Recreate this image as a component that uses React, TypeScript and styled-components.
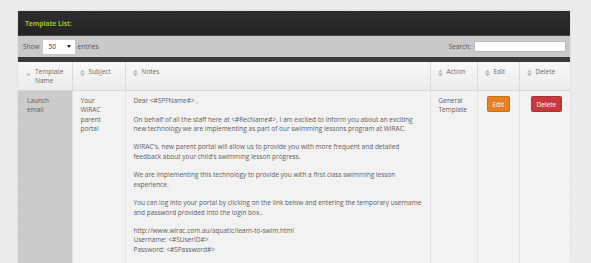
import React from 'react';
import styled, { createGlobalStyle } from 'styled-components';

const GlobalStyle = createGlobalStyle`
  html, body { margin: 0; padding: 0; }
  body {
    background-color: #ebebeb;
    background-image: repeating-linear-gradient(45deg, rgba(255,255,255,0.18) 0 1px, transparent 1px 3px);
    font-family: "Open Sans", "DejaVu Sans", sans-serif;
    color: #5c5c5c;
  }
`;

const Page = styled.div`
  padding: 11px 0 0 18px;
  height: 263px;
  box-sizing: border-box;
  overflow: hidden;
`;
const Panel = styled.div`
  width: 552px;
  box-shadow: 0 0 2px rgba(0, 0, 0, 0.12);
`;
const PanelHead = styled.div`
  height: 24px;
  background: linear-gradient(#2f2f31, #232325);
  border-bottom: 1px solid #444;
  display: flex; align-items: center;
  padding-left: 7px;
`;
const Title = styled.h2`
  margin: 0; font-size: 6.8px; font-weight: 700;
  color: #a6bd22; letter-spacing: -0.1px;
`;
const Toolbar = styled.div`
  height: 21px;
  background: #c9c9c9;
  display: flex; align-items: center; justify-content: space-between;
  padding: 0 4px 0 5px;
  font-size: 6.5px; color: #555;
  border-bottom: 5px solid #3a3a3a;
`;
const Group = styled.label`
  display: flex; align-items: center; gap: 3px;
`;
const LengthSelect = styled.div`
  width: 32px; height: 14px; background: #fff;
  display: flex; align-items: center; justify-content: space-between;
  padding: 0 4px 0 6px; box-sizing: border-box; font-size: 6.6px; color: #333;
  &::after { content: ''; border: 2px solid transparent; border-top: 3px solid #222; border-bottom: 0; }
`;
const SearchInput = styled.input`
  width: 92px; height: 11px; box-sizing: border-box;
  border: 1px solid #bbb; background: #fff; padding: 0; margin: 0;
`;
const Table = styled.table`
  width: 100%; border-collapse: collapse; table-layout: fixed;
  font-size: 6.5px; line-height: 9.3px;
`;
const Th = styled.th`
  background: linear-gradient(#f8f8f8, #ececec);
  border-left: 1px solid #dcdcdc;
  border-bottom: 1px solid #d8d8d8;
  height: 23px; padding: 5px 3px 0 7px;
  vertical-align: top; text-align: left;
  font-weight: 400; color: #6a6a6a;
  &:first-child { border-left: 0; padding-left: 8px; }
`;
const ThInner = styled.div`
  display: flex; gap: 4px; align-items: flex-start;
`;
const Icon = styled.svg`
  flex: none; margin-top: 2px;
`;
const Td = styled.td<{ $sorted?: boolean }>`
  background: ${p => (p.$sorted ? '#cbcbcb' : '#f2f2f2')};
  border-left: 1px solid #e2e2e2;
  padding: 5px 6px 20px 8px;
  vertical-align: top; color: #5c5c5c;
  height: 180px;
  white-space: nowrap;
  &:first-child { border-left: 0; padding-left: 9px; }
`;
const Para = styled.p`
  margin: 0 0 9.3px;
`;
const Button = styled.button<{ $color: string }>`
  border: 1px solid rgba(0,0,0,0.15); border-radius: 2px;
  background: ${p => p.$color}; color: #fff;
  font-family: inherit; font-size: 6.5px; height: 16px; padding: 0 5px;
  margin: 0 0 0 1px;
`;

const SortIcon = ({ mode }: { mode: 'both' | 'desc' }) => (
  <Icon width="5" height="8" viewBox="0 0 5 8">
    {mode === 'both' && <polygon points="0,3.4 2.5,0.8 5,3.4" fill="#bdbdbd" />}
    <polygon points={mode === 'both' ? '0,4.6 2.5,7.2 5,4.6' : '0,4.8 2.5,7 5,4.8'} fill="#b5b5b5" />
  </Icon>
);

const cols = [54, 53, 305, 47, 42, 51];
const heads: [string, 'both' | 'desc'][] = [
  ['Template Name', 'desc'], ['Subject', 'both'], ['Notes', 'both'],
  ['Action', 'both'], ['Edit', 'both'], ['Delete', 'both'],
];

export default function App() {
  return (
    <Page>
      <GlobalStyle />
      <Panel>
        <PanelHead><Title>Template List:</Title></PanelHead>
        <Toolbar>
          <Group>Show <LengthSelect>50</LengthSelect> entries</Group>
          <Group>Search: <SearchInput /></Group>
        </Toolbar>
        <Table>
          <colgroup>{cols.map((w, i) => <col key={i} style={{ width: w }} />)}</colgroup>
          <thead>
            <tr>
              {heads.map(([label, mode]) => (
                <Th key={label}>
                  <ThInner><SortIcon mode={mode} /><span>{label === 'Template Name' ? <>Template<br />Name</> : label}</span></ThInner>
                </Th>
              ))}
            </tr>
          </thead>
          <tbody>
            <tr>
              <Td $sorted>Launch<br />email</Td>
              <Td>Your<br />WIRAC<br />parent<br />portal</Td>
              <Td>
                <Para>Dear &lt;#SPFName#&gt; ,</Para>
                <Para>On behalf of all the staff here at &lt;#RecName#&gt;, I am excited to inform you about an exciting<br />new technology we are implementing as part of our swimming lessons program at WIRAC.</Para>
                <Para>WIRAC's, new parent portal will allow us to provide you with more frequent and detailed<br />feedback about your child's swimming lesson progress.</Para>
                <Para>We are implementing this technology to provide you with a first class swimming lesson<br />experience.</Para>
                <Para>You can log into your portal by clicking on the link below and entering the temporary username<br />and password provided into the login box..</Para>
                <Para>http://www.wirac.com.au/aquatic/learn-to-swim.html<br />Username: &lt;#SUserID#&gt;<br />Password: &lt;#SPassword#&gt;</Para>
              </Td>
              <Td>General<br />Template</Td>
              <Td><Button $color="#e8801e">Edit</Button></Td>
              <Td style={{ paddingLeft: 10 }}><Button $color="#c9393b">Delete</Button></Td>
            </tr>
          </tbody>
        </Table>
      </Panel>
    </Page>
  );
}
